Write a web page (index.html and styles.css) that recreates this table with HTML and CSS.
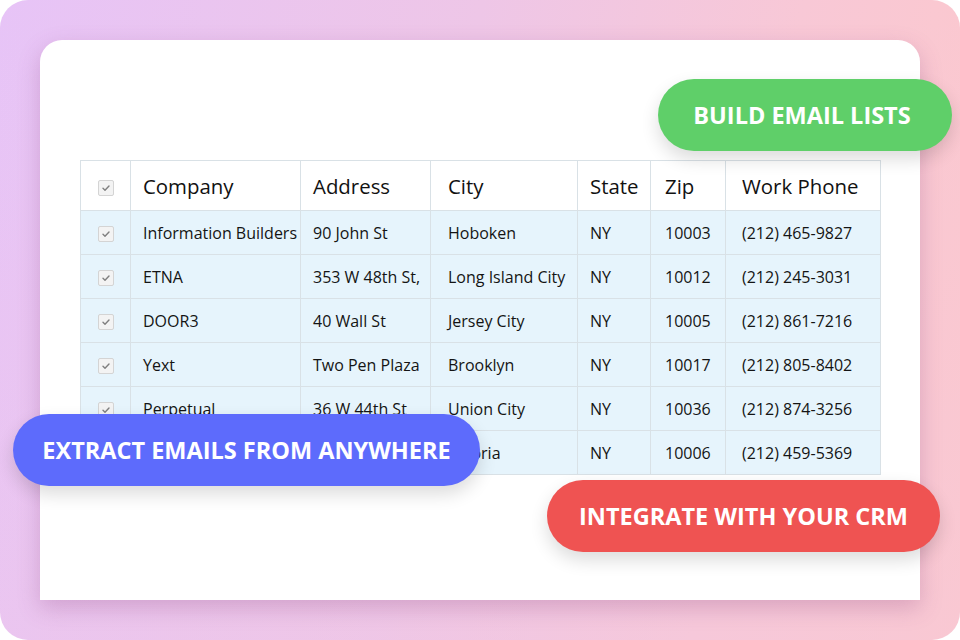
FILE: index.html
```html
<!DOCTYPE html>
<html lang="en">
<head>
<meta charset="utf-8">
<title>Email Extractor</title>
<link rel="stylesheet" href="styles.css">
</head>
<body>
<div class="frame">
  <div class="card">
    <table class="grid">
      <colgroup>
        <col class="c-chk"><col class="c-company"><col class="c-address"><col class="c-city"><col class="c-state"><col class="c-zip"><col class="c-phone">
      </colgroup>
      <thead>
        <tr>
          <th><span class="chk"><svg viewBox="0 0 14 14"><path d="M4 7.2l2 2 4-4.2"/></svg></span></th>
          <th>Company</th><th>Address</th><th>City</th><th>State</th><th>Zip</th><th>Work Phone</th>
        </tr>
      </thead>
      <tbody>
        <tr><td><span class="chk"><svg viewBox="0 0 14 14"><path d="M4 7.2l2 2 4-4.2"/></svg></span></td><td>Information Builders</td><td>90 John St</td><td>Hoboken</td><td>NY</td><td>10003</td><td>(212) 465-9827</td></tr>
        <tr><td><span class="chk"><svg viewBox="0 0 14 14"><path d="M4 7.2l2 2 4-4.2"/></svg></span></td><td>ETNA</td><td>353 W 48th St,</td><td>Long Island City</td><td>NY</td><td>10012</td><td>(212) 245-3031</td></tr>
        <tr><td><span class="chk"><svg viewBox="0 0 14 14"><path d="M4 7.2l2 2 4-4.2"/></svg></span></td><td>DOOR3</td><td>40 Wall St</td><td>Jersey City</td><td>NY</td><td>10005</td><td>(212) 861-7216</td></tr>
        <tr><td><span class="chk"><svg viewBox="0 0 14 14"><path d="M4 7.2l2 2 4-4.2"/></svg></span></td><td>Yext</td><td>Two Pen Plaza</td><td>Brooklyn</td><td>NY</td><td>10017</td><td>(212) 805-8402</td></tr>
        <tr><td><span class="chk"><svg viewBox="0 0 14 14"><path d="M4 7.2l2 2 4-4.2"/></svg></span></td><td>Perpetual</td><td>36 W 44th St</td><td>Union City</td><td>NY</td><td>10036</td><td>(212) 874-3256</td></tr>
        <tr><td><span class="chk"><svg viewBox="0 0 14 14"><path d="M4 7.2l2 2 4-4.2"/></svg></span></td><td>Acme Corp</td><td>1 Main St</td><td>Astoria</td><td>NY</td><td>10006</td><td>(212) 459-5369</td></tr>
      </tbody>
    </table>
  </div>
  <div class="pill pill-green">BUILD EMAIL LISTS</div>
  <div class="pill pill-blue">EXTRACT EMAILS FROM ANYWHERE</div>
  <div class="pill pill-red">INTEGRATE WITH YOUR CRM</div>
</div>
</body>
</html>
```

FILE: styles.css
```css
html, body {
  margin: 0;
  padding: 0;
  background: #ffffff;
}
body {
  font-family: "Open Sans", "Noto Sans", sans-serif;
}
.frame {
  position: relative;
  width: 960px;
  height: 640px;
  box-sizing: border-box;
  padding: 40px;
  border-radius: 28px;
  background:
    linear-gradient(to bottom, rgba(255,255,255,0) 0%, rgba(240,200,230,0.25) 100%),
    linear-gradient(100deg, #e7c4f7 0%, #eec6e7 45%, #f8c8d6 75%, #fcc8cc 100%);
  overflow: hidden;
}
.card {
  width: 880px;
  height: 560px;
  box-sizing: border-box;
  padding: 120px 40px 0 40px;
  background: #ffffff;
  border-radius: 22px 22px 0 0;
  box-shadow: 0 8px 22px rgba(140, 70, 130, 0.28);
}
.grid {
  border-collapse: collapse;
  table-layout: fixed;
  width: 800px;
  color: #141414;
}
.c-chk { width: 50px; }
.c-company { width: 170px; }
.c-address { width: 130px; }
.c-city { width: 147px; }
.c-state { width: 73px; }
.c-zip { width: 75px; }
.c-phone { width: 155px; }
.grid th, .grid td {
  border: 1px solid #d9e1e6;
  text-align: left;
  white-space: nowrap;
  overflow: hidden;
  padding: 0 0 0 12px;
}
.grid th {
  height: 49px;
  font-size: 20.4px;
  font-weight: 400;
  color: #111;
  background: #fff;
}
.grid td {
  height: 43px;
  font-size: 16px;
  background: #e6f4fc;
}
.grid th:nth-child(1), .grid td:nth-child(1) { padding: 0; text-align: center; }
.grid th:nth-child(4), .grid td:nth-child(4) { padding-left: 17px; }
.grid th:nth-child(5), .grid td:nth-child(5) { padding-left: 12px; }
.grid th:nth-child(6), .grid td:nth-child(6) { padding-left: 14px; }
.grid th:nth-child(7), .grid td:nth-child(7) { padding-left: 16px; }
.chk {
  display: inline-block;
  width: 14px;
  height: 14px;
  border: 1px solid #d4d4d4;
  border-radius: 2px;
  background: #f3f3f3;
  vertical-align: middle;
}
.chk svg {
  display: block;
  width: 14px;
  height: 14px;
  fill: none;
  stroke: #7f7f7f;
  stroke-width: 1.4;
  stroke-linecap: round;
  stroke-linejoin: round;
}
.pill {
  position: absolute;
  height: 72px;
  border-radius: 36px;
  display: flex;
  align-items: center;
  justify-content: center;
  color: #ffffff;
  font-size: 23.5px;
  font-weight: 700;
  box-shadow: 0 8px 18px rgba(0, 0, 0, 0.14);
}
.pill-green {
  left: 658px;
  top: 79px;
  width: 294px;
  background: #5fcf69;
  padding-right: 6px;
  box-sizing: border-box;
}
.pill-blue {
  left: 13px;
  top: 414px;
  width: 467px;
  background: #5d6bfc;
}
.pill-red {
  left: 547px;
  top: 480px;
  width: 393px;
  background: #ef5352;
}
```
